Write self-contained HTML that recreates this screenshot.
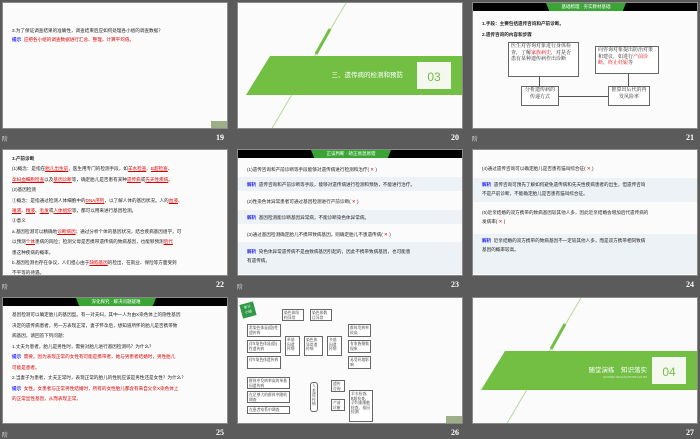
<!DOCTYPE html>
<html><head><meta charset="utf-8"><style>
*{margin:0;padding:0;box-sizing:border-box}
body{width:700px;height:438px;background:#5b5b5b;position:relative;overflow:hidden;font-family:"Liberation Sans","Noto Sans CJK SC",sans-serif}
.s{position:absolute;width:226px;height:127px;background:#fbfbfb;overflow:hidden;border:1px solid #8a8a8a}
.s.k{background:linear-gradient(#000 0,#000 8px,#fbfbfb 8px,#fbfbfb 100%)}
.n{position:absolute;color:#fff;font-size:8px;font-weight:bold;font-family:"Liberation Serif",serif}
.l{position:absolute;color:#ddd;font-size:6px}
.t{position:absolute;font-size:4.6px;line-height:8.6px;color:#222;white-space:nowrap}
.r{color:#d00}.b{color:#22f;font-weight:bold}
.hg{position:absolute;top:0;height:8px;background:#3aa535;clip-path:polygon(0 0,100% 0,96% 100%,4% 100%);color:#fff;font-size:4.5px;text-align:center;line-height:8px;z-index:2}
.bx{position:absolute;border:1px solid #666;background:#fff;font-family:"Liberation Serif","Noto Serif CJK SC",serif;font-size:5px;line-height:6.5px;padding:1px 2px;color:#222}
.band{position:absolute;left:0;width:100%;height:14px;background:#edf2f6}
.m{position:absolute;border:1px solid #666;background:#fff;font-size:3.8px;line-height:4.5px;padding:1px;font-family:"Liberation Serif","Noto Serif CJK SC",serif;color:#222}
</style></head><body>

<div class="s" style="left:2px;top:2px">
<div class="t" style="left:9px;top:24px">3.为了保证调查结果的准确性，调查结束后应如何处理各小组的调查数据？</div>
<div class="t" style="left:9px;top:33px"><span class="b">提示</span>&nbsp;&nbsp;<span class="r">应把各小组的调查数据进行汇总、整理，计算平均值。</span></div>
<div style="position:absolute;right:0;bottom:0;width:16px;height:7px;background:#9caf86"></div>
</div>
<div class="l" style="left:2px;top:134px">阶</div><div class="n" style="left:216px;top:133px">19</div>

<div class="s" style="left:237px;top:2px">
<svg width="226" height="127" style="position:absolute;left:0;top:0">
<line x1="108" y1="0" x2="33" y2="127" stroke="#b6d79b" stroke-width="1"/>
<line x1="92" y1="26" x2="78" y2="51" stroke="#72bf44" stroke-width="3"/>
<polygon points="32,53 226,53 226,92 8,92" fill="#72bf44"/>
<rect x="179" y="59" width="34" height="27" fill="#f4f8ef"/>
<text x="196" y="78" font-size="12" fill="#72bf44" text-anchor="middle" font-family="Liberation Sans">03</text>
<text x="165" y="74" font-size="6.5" fill="#fff" text-anchor="end" font-family="Liberation Sans,Noto Sans CJK SC">三、遗传病的检测和预防</text>
</svg>
</div>
<div class="n" style="left:451px;top:133px">20</div>

<div class="s k" style="left:472px;top:2px">
<div class="hg" style="left:73px;width:80px">基础梳理 · 夯实教材基础</div>
<div class="t" style="left:9px;top:17px;font-weight:bold">1.手段：主要包括遗传咨询和产前诊断。</div>
<div class="t" style="left:9px;top:28px;font-weight:bold">2.遗传咨询的内容和步骤</div>
<div class="bx" style="left:35px;top:39px;width:71px;height:35px">医生对咨询对象进行身体检查，了解<span class="r">家族病史</span>，对是否患有某种遗传病作出诊断</div>
<div class="bx" style="left:48px;top:83px;width:38px;height:20px;text-align:center">分析遗传病的传递方式</div>
<div class="bx" style="left:135px;top:83px;width:42px;height:20px;text-align:center">推算出后代的再发风险率</div>
<div class="bx" style="left:122px;top:43px;width:64px;height:28px">向咨询对象提出防治对策和建议，如进行<span class="r">产前诊断</span>、<span class="r">终止妊娠</span>等</div>
<div style="position:absolute;left:66px;top:74px;width:1px;height:9px;background:#555"></div>
<div style="position:absolute;left:86px;top:93px;width:49px;height:1px;background:#555"></div>
<div style="position:absolute;left:155px;top:71px;width:1px;height:12px;background:#555"></div>
</div>
<div class="l" style="left:472px;top:134px">阶</div><div class="n" style="left:686px;top:133px">21</div>

<div class="s" style="left:2px;top:149px">
<div class="t" style="left:9px;top:4px;line-height:10.4px">
<b>3.产前诊断</b><br>
(1)概念：是指在<span class="r"><u>胎儿出生前</u></span>，医生用专门的检测手段，如<span class="r"><u>羊水检查</u></span>、<span class="r"><u>B超检查</u></span>、<br>
<span class="r"><u>孕妇血细胞检查</u></span>以及<span class="r"><u>基因诊断</u></span>等，确定胎儿是否患有某种<span class="r"><u>遗传病</u></span>或<span class="r"><u>先天性疾病</u></span>。<br>
(2)基因检测<br>
①概念：是指通过检测人体细胞中的<span class="r"><u>DNA序列</u></span>，以了解人体的基因状况。人的<span class="r"><u>血液</u></span>、<br>
<span class="r"><u>唾液</u></span>、<span class="r"><u>精液</u></span>、<span class="r"><u>毛发</u></span>或<span class="r"><u>人体组织</u></span>等，都可以用来进行基因检测。<br>
②意义<br>
a.基因检测可以精确地<span class="r"><u>诊断病因</u></span>；通过分析个体的基因状况，结合疾病基因组学，可<br>
以预测<span class="r"><u>个体</u></span>患病的风险；检测父母是否携带遗传病的致病基因，也能够预测<span class="r"><u>后代</u></span><br>
患这种疾病的概率。<br>
b.基因检测也存在争议，人们担心由于<span class="r"><u>缺陷基因</u></span>的检出，在就业、保险等方面受到<br>
不平等的待遇。</div>
</div>
<div class="l" style="left:2px;top:282px">阶</div><div class="n" style="left:216px;top:280px">22</div>

<div class="s k" style="left:237px;top:149px">
<div class="hg" style="left:73px;width:80px">正误判断 · 矫正易混易错</div>
<div class="band" style="top:27px"></div><div class="band" style="top:60px"></div><div class="band" style="top:92px;height:32px"></div>
<div class="t" style="left:9px;top:16px">(1)遗传咨询和产前诊断等手段能够对遗传病进行检测和治疗(<span class="r"> ✕ </span>)</div>
<div class="t" style="left:9px;top:31px"><span class="b">解析</span>&nbsp; 遗传咨询和产前诊断等手段，能够对遗传病进行检测和预防，不能进行治疗。</div>
<div class="t" style="left:9px;top:48px">(2)性染色体异常患者可通过基因检测进行产前诊断(<span class="r"> ✕ </span>)</div>
<div class="t" style="left:9px;top:64px"><span class="b">解析</span>&nbsp; 基因检测能诊断基因异常病，不能诊断染色体异常病。</div>
<div class="t" style="left:9px;top:81px">(3)通过基因检测确定胎儿不携带致病基因，则确定胎儿不患遗传病(<span class="r"> ✕ </span>)</div>
<div class="t" style="left:9px;top:97px;line-height:9px"><span class="b">解析</span>&nbsp; 染色体异常遗传病不是由致病基因引起的，因此不携带致病基因，也可能患<br>有遗传病。</div>
</div>
<div class="l" style="left:237px;top:282px">阶</div><div class="n" style="left:451px;top:280px">23</div>

<div class="s" style="left:472px;top:149px">
<div class="band" style="top:28px;height:24px"></div><div class="band" style="top:84px;height:40px"></div>
<div class="t" style="left:9px;top:15px">(4)通过遗传咨询可以确定胎儿是否患有猫叫综合征(<span class="r"> ✕ </span>)</div>
<div class="t" style="left:9px;top:30px;line-height:9px"><span class="b">解析</span>&nbsp; 遗传咨询可预先了解如何避免遗传病和先天性疾病患者的出生，但遗传咨询<br>不是产前诊断，不能确定胎儿是否患有猫叫综合征。</div>
<div class="t" style="left:9px;top:58px;line-height:9px">(5)近亲结婚的双方携带的致病基因较其他人多，因此近亲结婚会增加后代遗传病的<br>发病率(<span class="r"> ✕ </span>)</div>
<div class="t" style="left:9px;top:86px;line-height:9px"><span class="b">解析</span>&nbsp; 近亲结婚的双方携带的致病基因不一定较其他人多，而是双方携带相同致病<br>基因的概率较高。</div>
</div>
<div class="n" style="left:686px;top:280px">24</div>

<div class="s k" style="left:2px;top:297px">
<div class="hg" style="left:73px;width:80px">深化探究 · 解决问题疑难</div>
<div class="t" style="left:9px;top:12px;line-height:10.5px">
基因检测可以确定胎儿的基因型。有一对夫妇，其中一人为由X染色体上的隐性基因<br>
决定的遗传病患者，另一方表现正常，妻子怀孕后，想知道所怀的胎儿是否携带致<br>
病基因，请回答下列问题：<br>
1.丈夫为患者，胎儿是男性时，需要对胎儿进行基因检测吗？为什么？<br>
<span class="b">提示</span>&nbsp; <span class="r">需要。因为表现正常的女性有可能是携带者，她与男患者结婚时，男性胎儿</span><br>
<span class="r">可能是患者。</span><br>
2.当妻子为患者，丈夫正常时，表现正常的胎儿的性别应该是男性还是女性？为什么？<br>
<span class="b">提示</span>&nbsp; <span class="r">女性。女患者与正常男性结婚时，所有的女性胎儿都含有来自父亲X染色体上</span><br>
<span class="r">的正常显性基因，从而表现正常。</span></div>
</div>
<div class="l" style="left:2px;top:430px">阶</div><div class="n" style="left:216px;top:428px">25</div>

<div class="s" style="left:237px;top:297px">
<div style="position:absolute;left:3px;top:5px;width:14px;height:14px;background:#2f9a48;transform:rotate(-15deg);color:#fff;font-size:3.5px;text-align:center;line-height:5px;padding-top:2px">学习<br>小结</div>
<div class="m" style="left:44px;top:11px;width:22px;height:12px">染色体结构异常</div>
<div class="m" style="left:72px;top:11px;width:22px;height:12px">染色体数目异常</div>
<div class="m" style="left:9px;top:26px;width:34px;height:13px">常染色体显(隐)性遗传病</div>
<div class="m" style="left:9px;top:42px;width:34px;height:13px">伴X染色体显(隐)性遗传病</div>
<div class="m" style="left:9px;top:58px;width:34px;height:13px">伴Y染色体遗传病</div>
<div class="m" style="left:47px;top:38px;width:15px;height:20px">单基因遗传病</div>
<div class="m" style="left:66px;top:38px;width:19px;height:20px">染色体异常遗传病</div>
<div class="m" style="left:89px;top:38px;width:15px;height:20px">多基因遗传病</div>
<div class="m" style="left:110px;top:26px;width:23px;height:13px">群体发病率较高</div>
<div class="m" style="left:110px;top:42px;width:23px;height:13px">有家族聚集现象</div>
<div class="m" style="left:110px;top:58px;width:23px;height:13px">易受环境影响</div>
<div class="m" style="left:9px;top:79px;width:43px;height:12px">群体中发病率高的单基因遗传病</div>
<div class="m" style="left:9px;top:93px;width:43px;height:12px">在足够大的群体中随机调查</div>
<div class="m" style="left:9px;top:108px;width:43px;height:8px">在患者家系中调查</div>
<div class="m" style="left:72px;top:84px;width:8px;height:30px;border-radius:3px">人类遗传病</div>
<div class="m" style="left:93px;top:82px;width:14px;height:12px">遗传咨询</div>
<div class="m" style="left:93px;top:101px;width:14px;height:12px">产前诊断</div>
<div class="m" style="left:111px;top:92px;width:24px;height:32px">羊水检查、B超检查、孕妇血细胞检查、基因检测</div>
<div style="position:absolute;right:0;bottom:0;width:16px;height:7px;background:#9caf86"></div>
</div>
<div class="n" style="left:451px;top:428px">26</div>

<div class="s" style="left:472px;top:297px">
<svg width="226" height="127" style="position:absolute;left:0;top:0">
<line x1="108" y1="0" x2="33" y2="127" stroke="#b6d79b" stroke-width="1"/>
<line x1="92" y1="26" x2="78" y2="51" stroke="#72bf44" stroke-width="3"/>
<polygon points="32,53 226,53 226,92 8,92" fill="#72bf44"/>
<rect x="179" y="59" width="34" height="27" fill="#f4f8ef"/>
<text x="196" y="78" font-size="12" fill="#72bf44" text-anchor="middle" font-family="Liberation Sans">04</text>
<text x="174" y="74" font-size="6.5" fill="#fff" text-anchor="end" font-family="Liberation Sans,Noto Sans CJK SC">随堂演练　知识落实</text>
<text x="174" y="80" font-size="2.5" fill="#e6f2dc" text-anchor="end" font-family="Liberation Sans">SUI TANG YAN LIAN  ZHI SHI LUO SHI</text>
</svg>
</div>
<div class="n" style="left:686px;top:428px">27</div>

</body></html>
